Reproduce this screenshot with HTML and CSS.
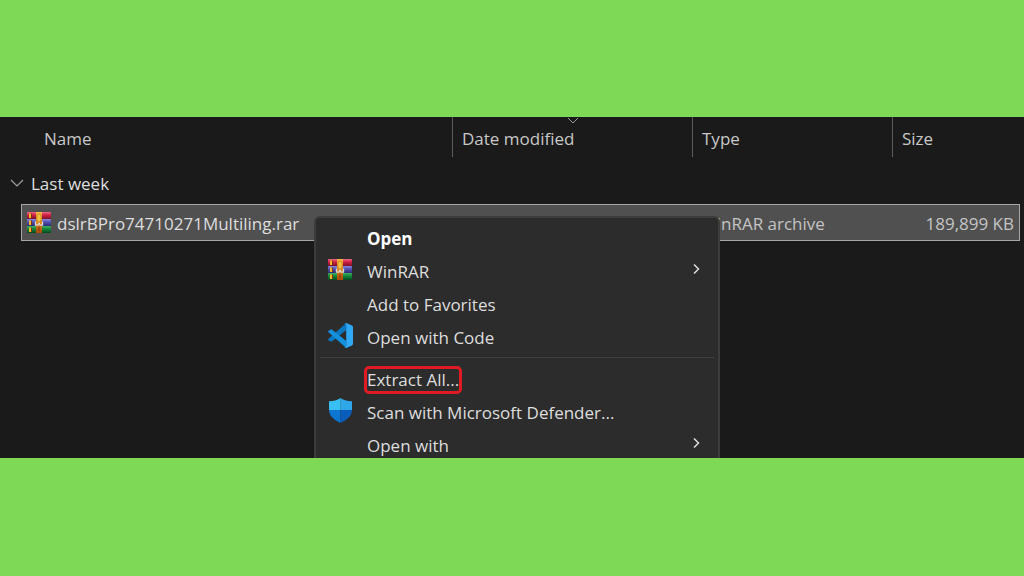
FILE: index.html
```html
<!DOCTYPE html>
<html lang="en">
<head>
<meta charset="utf-8">
<title>File Explorer</title>
<link rel="stylesheet" href="styles.css">
</head>
<body>
<svg class="defs" width="0" height="0" aria-hidden="true">
  <defs>
    <linearGradient id="red" x2="0" y2="1"><stop offset="0" stop-color="#ee6a86"/><stop offset=".4" stop-color="#d32347"/><stop offset="1" stop-color="#7c1029"/></linearGradient>
    <linearGradient id="blue" x2="0" y2="1"><stop offset="0" stop-color="#8d8be0"/><stop offset=".4" stop-color="#5553b4"/><stop offset="1" stop-color="#2c2a70"/></linearGradient>
    <linearGradient id="green" x2="0" y2="1"><stop offset="0" stop-color="#3fb264"/><stop offset=".4" stop-color="#16883c"/><stop offset="1" stop-color="#07481c"/></linearGradient>
    <linearGradient id="strap" x2="0" y2="1"><stop offset="0" stop-color="#f5b942"/><stop offset=".45" stop-color="#e08a1c"/><stop offset="1" stop-color="#a8470c"/></linearGradient>
    <symbol id="winrar" viewBox="0 0 24 21">
      <rect width="24" height="7" rx="1" fill="url(#red)"/>
      <rect y="7" width="24" height="7" rx="1" fill="url(#blue)"/>
      <rect y="14" width="24" height="7" rx="1" fill="url(#green)"/>
      <path d="M2 1.500h2v4.500h-2zM2 8.500h2v4.500h-2zM2 15.500h2v4.500h-2z" fill="#f3b52c"/>
      <path d="M4 1.500h1v4.500h-1zM4 8.500h1v4.500h-1zM4 15.500h1v4.500h-1z" fill="#7a3410"/>
      <rect x="9" width="6" height="21" fill="url(#strap)"/>
      <rect x="10" y="2" width="4" height="8" rx="2" fill="#f2c243" stroke="#b86e12" stroke-width=".6"/>
      <path d="M8.500 9.500v3.700h2.300l1.200-2 1.200 2h2.300V9.500" fill="none" stroke="#ddd9d4" stroke-width="1.300"/>
      <path d="M12 15v4" stroke="#7d350b" stroke-width="1"/>
    </symbol>
    <symbol id="chevron" viewBox="0 0 12 12"><path d="M4 1.500l4.500 4.500-4.500 4.500" fill="none" stroke="currentColor" stroke-width="1.500"/></symbol>
  </defs>
</svg>
<main class="explorer">
  <table class="files">
    <colgroup><col class="col-gutter"><col class="col-name"><col class="col-date"><col class="col-type"><col class="col-size"></colgroup>
    <thead>
      <tr>
        <td></td>
        <th class="head-name" scope="col">Name</th>
        <th class="head sorted" scope="col" aria-sort="descending">Date modified<svg class="sort" viewBox="0 0 12 6" aria-hidden="true"><path d="M1 0l5 5 5-5" fill="none" stroke="currentColor"/></svg></th>
        <th class="head" scope="col">Type</th>
        <th class="head" scope="col">Size</th>
      </tr>
    </thead>
    <tbody>
      <tr>
        <th class="group" colspan="5" scope="rowgroup">
          <button class="group-toggle" type="button" aria-expanded="true"><svg class="group-chevron" viewBox="0 0 14 8" aria-hidden="true"><path d="M1 1l6 6 6-6" fill="none" stroke="currentColor" stroke-width="1.200"/></svg>Last week</button>
        </th>
      </tr>
      <tr class="file">
        <td></td>
        <td class="cell cell-name"><span class="file-name"><svg class="rar" aria-hidden="true"><use href="#winrar"/></svg>dslrBPro74710271Multiling.rar</span></td>
        <td class="cell"></td>
        <td class="cell cell-type">WinRAR archive</td>
        <td class="cell cell-size">189,899 KB</td>
      </tr>
    </tbody>
  </table>
  <div class="menu" role="menu">
    <button class="item default" type="button" role="menuitem"><span class="icon"></span>Open</button>
    <button class="item" type="button" role="menuitem"><span class="icon"><svg class="rar" aria-hidden="true"><use href="#winrar"/></svg></span>WinRAR<svg class="arrow" aria-hidden="true"><use href="#chevron"/></svg></button>
    <button class="item" type="button" role="menuitem"><span class="icon"></span>Add to Favorites</button>
    <button class="item" type="button" role="menuitem"><span class="icon"><svg class="app" viewBox="0 0 24 24" aria-hidden="true"><path d="M17.500 0v6.800L3.400 18 .5 16.600q-.8-.7 0-1.500z" fill="#0a78c0"/><path d="M17.500 24v-6.800L3.400 6 .5 7.400q-.8.700 0 1.500z" fill="#1490dc"/><path d="M17.500 0L23 2.500q1 .5 1 1.500v16q0 1-1 1.500L17.500 24q-.8 0-1.500-.8 1.500.4 1.500-1.400V2.200Q17.500.4 16 .8q.7-.8 1.500-.8z" fill="#2fa8f6"/></svg></span>Open with Code</button>
    <hr class="rule">
    <button class="item" type="button" role="menuitem"><span class="icon"></span><span class="marked">Extract All...</span></button>
    <button class="item" type="button" role="menuitem"><span class="icon"><svg class="app" viewBox="0 0 24 25" aria-hidden="true"><path d="M12 0q5 3.300 11.500 3.300V12H12z" fill="#2ea6e8"/><path d="M12 0Q7 3.300.5 3.300V12H12z" fill="#38bff3"/><path d="M.5 12H12v13Q.5 20 .5 12z" fill="#0c76d2"/><path d="M23.500 12H12v13q11.500-5 11.500-13z" fill="#0a5dbb"/></svg></span>Scan with Microsoft Defender...</button>
    <button class="item" type="button" role="menuitem"><span class="icon"></span>Open with<svg class="arrow" aria-hidden="true"><use href="#chevron"/></svg></button>
  </div>
</main>
</body>
</html>
```

FILE: styles.css
```css
* { box-sizing: border-box; }

body {
  margin: 0;
  min-height: 100vh;
  display: grid;
  grid-template-rows: 117fr 341fr 118fr;
  background: #7ed957;
  color: #dedede;
  font: 17px/24px "Open Sans", "Noto Sans", sans-serif;
}

button {
  border: 0;
  background: none;
  color: inherit;
  font: inherit;
}

.defs { position: absolute; }

.explorer {
  grid-row: 2;
  position: relative;
  overflow: hidden;
  background: #1a1a1a;
}

.files {
  width: calc(100% - 4px);
  table-layout: fixed;
  border-collapse: separate;
  border-spacing: 0;
}

.files th, .files td {
  padding: 0;
  font-weight: 400;
  text-align: left;
  white-space: nowrap;
}

.col-gutter { width: 21px; }
.col-name { width: 431px; }
.col-date { width: 240px; }
.col-type { width: 200px; }

.files thead { height: 40px; color: #c8c8c8; }
.files thead th { padding-top: 4px; }
.files .head-name { padding-left: 23px; }
.files .head { padding-left: 9px; border-left: 1px solid #5c5c5c; }
.sorted { position: relative; }

.sort {
  position: absolute;
  top: 1px;
  left: 50%;
  width: 12px;
  height: 6px;
  margin-left: -6px;
  color: #9a9a9a;
}

.files .group { height: 47px; padding: 6px 0 0 10px; }

.group-toggle {
  display: flex;
  align-items: center;
  gap: 7px;
  padding: 0;
}

.group-chevron { width: 14px; height: 8px; margin-bottom: 2px; color: #a0a0a0; }

.file { height: 37px; }

.files .cell {
  padding-top: 3px;
  background: #505050;
  border: solid #a6a6a6;
  border-width: 1px 0;
}

.files .cell-name { padding-left: 5px; border-left-width: 1px; }
.files .cell-type { padding-left: 9px; color: #c4c4c4; }

.files .cell-size {
  padding-right: 5px;
  border-right-width: 1px;
  color: #c4c4c4;
  text-align: right;
}

.file-name { display: flex; align-items: center; gap: 6px; }

.rar { width: 24px; height: 21px; }
.file-name .rar { margin-bottom: 4px; }

.menu {
  position: absolute;
  top: 99px;
  left: 314px;
  width: 406px;
  padding: 4px;
  background: #2c2c2c;
  border: 2px solid #3c3c3c;
  border-radius: 6px 6px 0 0;
}

.item {
  display: flex;
  align-items: center;
  width: 100%;
  height: 33px;
  padding: 0 12px 0 8px;
  text-align: left;
}

.default { color: #fff; font-weight: 700; }

.icon { display: flex; width: 39px; padding-bottom: 5px; }
.app { width: 25px; height: 25px; }
.arrow { width: 12px; height: 12px; margin: 0 0 5px auto; }

.rule {
  height: 1px;
  margin: 3px 0 5px;
  border: 0;
  background: #3e3e3e;
}

.marked {
  line-height: 22px;
  outline: 3px solid #e01b24;
  border-radius: 2px;
}
```
